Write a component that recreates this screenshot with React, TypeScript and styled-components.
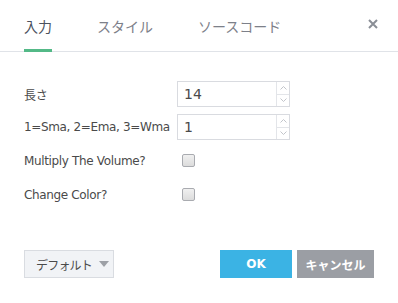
import React from "react";
import styled, { createGlobalStyle } from "styled-components";

const GlobalStyle = createGlobalStyle`
  html, body {
    margin: 0;
    padding: 0;
    background: #ffffff;
  }
  body {
    font-family: "DejaVu Sans", "Noto Sans CJK JP", sans-serif;
    color: #4a4a4a;
  }
`;

const Dialog = styled.div`
  width: 398px;
  height: 303px;
  display: flex;
  flex-direction: column;
  box-sizing: border-box;
`;

const Header = styled.div`
  display: flex;
  align-items: stretch;
  height: 52px;
  padding: 0 20px 0 24px;
  border-bottom: 1px solid #e0e3e8;
  box-sizing: border-box;
`;

const Tab = styled.div<{ $active?: boolean }>`
  display: flex;
  align-items: center;
  margin-right: 45px;
  padding-top: 2px;
  font-size: 14px;
  color: ${(p) => (p.$active ? "#4c525e" : "#7d8089")};
  border-bottom: 3px solid ${(p) => (p.$active ? "#53b987" : "transparent")};
  margin-bottom: -1px;
  box-sizing: border-box;
`;

const Close = styled.div`
  margin-left: auto;
  display: flex;
  align-items: center;
  padding-bottom: 4px;
`;

const Body = styled.div`
  flex: 1;
  display: flex;
  flex-direction: column;
  padding: 29px 24px 0 24px;
  gap: 7px;
`;

const Row = styled.div<{ $h?: number }>`
  display: flex;
  align-items: center;
  height: ${(p) => p.$h ?? 26}px;
`;

const Label = styled.div`
  width: 153px;
  font-size: 12px;
  letter-spacing: -0.35px;
  color: #4a4a4a;
  white-space: nowrap;
`;

const NumberBox = styled.div`
  display: flex;
  width: 113px;
  height: 26px;
  border: 1px solid #d9dbe0;
  box-sizing: border-box;
`;

const NumberValue = styled.div`
  flex: 1;
  display: flex;
  align-items: center;
  padding-left: 6px;
  font-size: 14px;
  color: #4a4a4a;
`;

const Spinner = styled.div`
  width: 12px;
  display: flex;
  flex-direction: column;
  border-left: 1px solid #e3e5e9;
`;

const SpinHalf = styled.div<{ $top?: boolean }>`
  flex: 1;
  display: flex;
  align-items: center;
  justify-content: center;
  border-bottom: ${(p) => (p.$top ? "1px solid #e3e5e9" : "none")};
`;

const Checkbox = styled.div`
  width: 11px;
  height: 11px;
  margin-left: 5px;
  border: 1px solid #a9abb0;
  border-radius: 2px;
  background: linear-gradient(#f0f0f0, #dcdcdc);
`;

const Footer = styled.div`
  display: flex;
  align-items: center;
  padding: 0 24px 25px 24px;
  height: 28px;
`;

const DefaultButton = styled.div`
  display: flex;
  align-items: center;
  gap: 7px;
  height: 28px;
  width: 90px;
  padding: 0 0 0 11px;
  background: #f1f3f6;
  border: 1px solid #d9dce1;
  box-sizing: border-box;
  font-size: 12px;
  letter-spacing: -0.8px;
  color: #4a4a4a;
`;

const Caret = styled.span`
  width: 0;
  height: 0;
  border-left: 5px solid transparent;
  border-right: 5px solid transparent;
  border-top: 6px solid #9da0a6;
`;

const Actions = styled.div`
  margin-left: auto;
  display: flex;
  gap: 5px;
`;

const ActionButton = styled.div<{ $bg: string; $w: number }>`
  width: ${(p) => p.$w}px;
  height: 28px;
  display: flex;
  align-items: center;
  justify-content: center;
  background: ${(p) => p.$bg};
  color: #ffffff;
  font-size: 12px;
  font-weight: bold;
`;

const Chevron = ({ up }: { up?: boolean }) => (
  <svg width="7" height="4" viewBox="0 0 7 4">
    <path
      d={up ? "M0.5 3.5 L3.5 0.5 L6.5 3.5" : "M0.5 0.5 L3.5 3.5 L6.5 0.5"}
      fill="none"
      stroke="#c2c5ca"
      strokeWidth="1"
    />
  </svg>
);

const NumberInput = ({ value }: { value: string }) => (
  <NumberBox>
    <NumberValue>{value}</NumberValue>
    <Spinner>
      <SpinHalf $top>
        <Chevron up />
      </SpinHalf>
      <SpinHalf>
        <Chevron />
      </SpinHalf>
    </Spinner>
  </NumberBox>
);

export default function App() {
  return (
    <>
      <GlobalStyle />
      <Dialog>
        <Header>
          <Tab $active>入力</Tab>
          <Tab>スタイル</Tab>
          <Tab>ソースコード</Tab>
          <Close>
            <svg width="10" height="10" viewBox="0 0 10 10">
              <path d="M1 1 L9 9 M9 1 L1 9" stroke="#8a8e96" strokeWidth="2" />
            </svg>
          </Close>
        </Header>
        <Body>
          <Row>
            <Label>長さ</Label>
            <NumberInput value="14" />
          </Row>
          <Row>
            <Label>1=Sma, 2=Ema, 3=Wma</Label>
            <NumberInput value="1" />
          </Row>
          <Row $h={27}>
            <Label>Multiply The Volume?</Label>
            <Checkbox />
          </Row>
          <Row $h={27}>
            <Label>Change Color?</Label>
            <Checkbox />
          </Row>
        </Body>
        <Footer>
          <DefaultButton>
            デフォルト
            <Caret />
          </DefaultButton>
          <Actions>
            <ActionButton $bg="#3bb3e4" $w={72}>OK</ActionButton>
            <ActionButton $bg="#9b9ea4" $w={77}>キャンセル</ActionButton>
          </Actions>
        </Footer>
      </Dialog>
    </>
  );
}
